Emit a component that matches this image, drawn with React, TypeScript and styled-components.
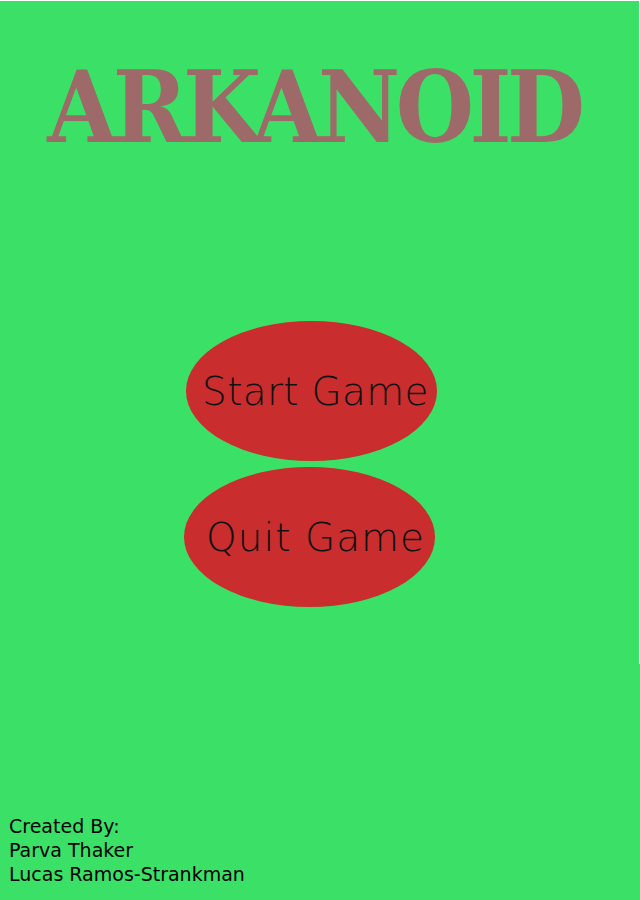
import React from "react";
import styled, { createGlobalStyle } from "styled-components";

const Global = createGlobalStyle`
  html, body { margin: 0; padding: 0; background: #ffffff; }
  #root { width: 640px; }
`;

const Page = styled.div`
  box-sizing: border-box;
  width: 640px;
  height: 900px;
  border-top: 1px solid #ffffff;
  background:
    linear-gradient(to right, transparent 639px, #ffffff 639px) top / 100% 663px no-repeat,
    #3be166;
  display: flex;
  flex-direction: column;
  align-items: center;
`;

const Title = styled.h1`
  margin: 56px 0 0 -12px;
  font-family: "DejaVu Serif Condensed", "DejaVu Serif", "Liberation Serif", serif;
  font-weight: 700;
  font-size: 100px;
  line-height: 100px;
  letter-spacing: -4.5px;
  color: #9e6a69;
`;

const Menu = styled.div`
  margin-top: 164px;
  display: flex;
  flex-direction: column;
  gap: 6px;
`;

const OvalButton = styled.button<{ $shift: number }>`
  width: 251px;
  height: 140px;
  margin-left: ${(p) => p.$shift}px;
  border: none;
  border-radius: 50%;
  background: #c92d2d;
  color: #111111;
  font-family: "DejaVu Sans", "Liberation Sans", sans-serif;
  font-size: 39px;
  font-weight: 200;
  padding: 0;
  display: flex;
  align-items: center;
  justify-content: center;
  cursor: pointer;
`;

const ButtonLabel = styled.span<{ $dx: number; $ls: number }>`
  margin-left: ${(p) => p.$dx}px;
  letter-spacing: ${(p) => p.$ls}px;
`;

const Credits = styled.div`
  margin-top: auto;
  align-self: flex-start;
  padding: 0 0 14px 9px;
  font-family: "DejaVu Sans", sans-serif;
  font-size: 19px;
  line-height: 24px;
  color: #000000;
`;

export default function App() {
  return (
    <>
      <Global />
      <Page>
        <Title>ARKANOID</Title>
        <Menu>
          <OvalButton $shift={-17}>
            <ButtonLabel $dx={8} $ls={0.3}>Start Game</ButtonLabel>
          </OvalButton>
          <OvalButton $shift={-19}>
            <ButtonLabel $dx={12} $ls={1}>Quit Game</ButtonLabel>
          </OvalButton>
        </Menu>
        <Credits>
          <div>Created By:</div>
          <div>Parva Thaker</div>
          <div>Lucas Ramos-Strankman</div>
        </Credits>
      </Page>
    </>
  );
}
